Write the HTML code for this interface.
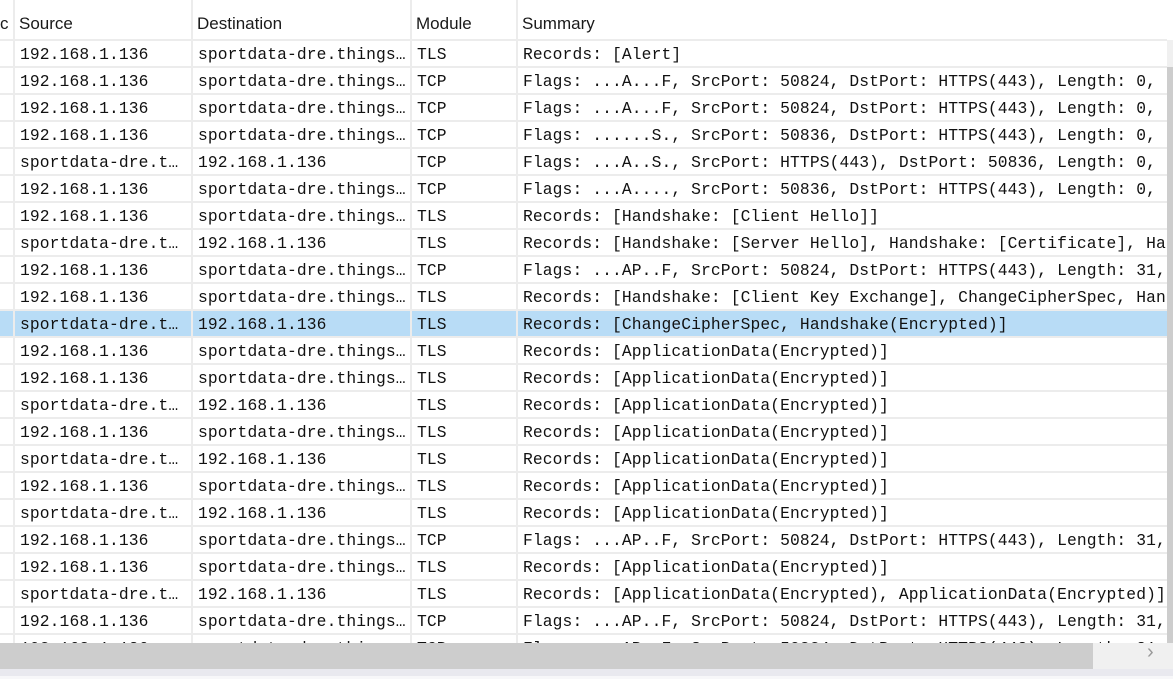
<!DOCTYPE html>
<html><head><meta charset="utf-8"><style>
*{margin:0;padding:0;box-sizing:border-box}
body{width:1173px;height:679px;overflow:hidden;background:#fff;position:relative;font-family:"Liberation Sans",sans-serif}
#grid{position:absolute;left:0;top:0;width:1167px;height:643px;overflow:hidden;background:#ececec}
.r{position:absolute;left:0;height:25px;width:1167px}
.c{position:absolute;top:0;height:25px;background:#fff;font-family:"Liberation Mono",monospace;font-size:16.3px;letter-spacing:0.12px;line-height:28px;color:#111;white-space:nowrap;overflow:hidden;padding-left:5px}
.sel .c{background:#b8dcf6}
.c0{left:0;width:13px;padding:0}
.c1{left:15px;width:176px}
.c2{left:193px;width:217px}
.c3{left:412px;width:104px}
.c4{left:518px;width:649px}
.h{position:absolute;top:0;height:39px;background:#fff;font-size:17px;line-height:48px;color:#1a1a1a;padding-left:4px;overflow:hidden;white-space:nowrap}
#vs{position:absolute;left:1167px;top:40px;width:6px;height:603px;background:#cdcdcd}
#vs0{position:absolute;left:1167px;top:40px;width:6px;height:27px;background:#f0f0f0}
#hs{position:absolute;left:0;top:643px;width:1173px;height:26px;background:#f0f0f0}
#hst{position:absolute;left:0;top:643px;width:1093px;height:26px;background:#cdcdcd}
#arr{position:absolute;left:1147px;top:641px;color:#999;font-size:20px}
#bot{position:absolute;left:0;top:669px;width:1173px;height:10px;background:#e9e9ef}
#bot2{position:absolute;left:0;top:676px;width:1173px;height:3px;background:#f7f7f9}
</style></head><body>
<div id="grid">
<div class="h" style="left:0;width:13px;padding-left:0">c</div>
<div class="h" style="left:15px;width:176px">Source</div>
<div class="h" style="left:193px;width:217px">Destination</div>
<div class="h" style="left:412px;width:104px">Module</div>
<div class="h" style="left:518px;width:649px">Summary</div>

<div class="r" style="top:41px"><div class="c c0"></div><div class="c c1">192.168.1.136</div><div class="c c2">sportdata-dre.things…</div><div class="c c3">TLS</div><div class="c c4">Records: [Alert]</div></div>
<div class="r" style="top:68px"><div class="c c0"></div><div class="c c1">192.168.1.136</div><div class="c c2">sportdata-dre.things…</div><div class="c c3">TCP</div><div class="c c4">Flags: ...A...F, SrcPort: 50824, DstPort: HTTPS(443), Length: 0,</div></div>
<div class="r" style="top:95px"><div class="c c0"></div><div class="c c1">192.168.1.136</div><div class="c c2">sportdata-dre.things…</div><div class="c c3">TCP</div><div class="c c4">Flags: ...A...F, SrcPort: 50824, DstPort: HTTPS(443), Length: 0,</div></div>
<div class="r" style="top:122px"><div class="c c0"></div><div class="c c1">192.168.1.136</div><div class="c c2">sportdata-dre.things…</div><div class="c c3">TCP</div><div class="c c4">Flags: ......S., SrcPort: 50836, DstPort: HTTPS(443), Length: 0,</div></div>
<div class="r" style="top:149px"><div class="c c0"></div><div class="c c1">sportdata-dre.t…</div><div class="c c2">192.168.1.136</div><div class="c c3">TCP</div><div class="c c4">Flags: ...A..S., SrcPort: HTTPS(443), DstPort: 50836, Length: 0,</div></div>
<div class="r" style="top:176px"><div class="c c0"></div><div class="c c1">192.168.1.136</div><div class="c c2">sportdata-dre.things…</div><div class="c c3">TCP</div><div class="c c4">Flags: ...A...., SrcPort: 50836, DstPort: HTTPS(443), Length: 0,</div></div>
<div class="r" style="top:203px"><div class="c c0"></div><div class="c c1">192.168.1.136</div><div class="c c2">sportdata-dre.things…</div><div class="c c3">TLS</div><div class="c c4">Records: [Handshake: [Client Hello]]</div></div>
<div class="r" style="top:230px"><div class="c c0"></div><div class="c c1">sportdata-dre.t…</div><div class="c c2">192.168.1.136</div><div class="c c3">TLS</div><div class="c c4">Records: [Handshake: [Server Hello], Handshake: [Certificate], Ha</div></div>
<div class="r" style="top:257px"><div class="c c0"></div><div class="c c1">192.168.1.136</div><div class="c c2">sportdata-dre.things…</div><div class="c c3">TCP</div><div class="c c4">Flags: ...AP..F, SrcPort: 50824, DstPort: HTTPS(443), Length: 31,</div></div>
<div class="r" style="top:284px"><div class="c c0"></div><div class="c c1">192.168.1.136</div><div class="c c2">sportdata-dre.things…</div><div class="c c3">TLS</div><div class="c c4">Records: [Handshake: [Client Key Exchange], ChangeCipherSpec, Han</div></div>
<div class="r sel" style="top:311px"><div class="c c0"></div><div class="c c1">sportdata-dre.t…</div><div class="c c2">192.168.1.136</div><div class="c c3">TLS</div><div class="c c4">Records: [ChangeCipherSpec, Handshake(Encrypted)]</div></div>
<div class="r" style="top:338px"><div class="c c0"></div><div class="c c1">192.168.1.136</div><div class="c c2">sportdata-dre.things…</div><div class="c c3">TLS</div><div class="c c4">Records: [ApplicationData(Encrypted)]</div></div>
<div class="r" style="top:365px"><div class="c c0"></div><div class="c c1">192.168.1.136</div><div class="c c2">sportdata-dre.things…</div><div class="c c3">TLS</div><div class="c c4">Records: [ApplicationData(Encrypted)]</div></div>
<div class="r" style="top:392px"><div class="c c0"></div><div class="c c1">sportdata-dre.t…</div><div class="c c2">192.168.1.136</div><div class="c c3">TLS</div><div class="c c4">Records: [ApplicationData(Encrypted)]</div></div>
<div class="r" style="top:419px"><div class="c c0"></div><div class="c c1">192.168.1.136</div><div class="c c2">sportdata-dre.things…</div><div class="c c3">TLS</div><div class="c c4">Records: [ApplicationData(Encrypted)]</div></div>
<div class="r" style="top:446px"><div class="c c0"></div><div class="c c1">sportdata-dre.t…</div><div class="c c2">192.168.1.136</div><div class="c c3">TLS</div><div class="c c4">Records: [ApplicationData(Encrypted)]</div></div>
<div class="r" style="top:473px"><div class="c c0"></div><div class="c c1">192.168.1.136</div><div class="c c2">sportdata-dre.things…</div><div class="c c3">TLS</div><div class="c c4">Records: [ApplicationData(Encrypted)]</div></div>
<div class="r" style="top:500px"><div class="c c0"></div><div class="c c1">sportdata-dre.t…</div><div class="c c2">192.168.1.136</div><div class="c c3">TLS</div><div class="c c4">Records: [ApplicationData(Encrypted)]</div></div>
<div class="r" style="top:527px"><div class="c c0"></div><div class="c c1">192.168.1.136</div><div class="c c2">sportdata-dre.things…</div><div class="c c3">TCP</div><div class="c c4">Flags: ...AP..F, SrcPort: 50824, DstPort: HTTPS(443), Length: 31,</div></div>
<div class="r" style="top:554px"><div class="c c0"></div><div class="c c1">192.168.1.136</div><div class="c c2">sportdata-dre.things…</div><div class="c c3">TLS</div><div class="c c4">Records: [ApplicationData(Encrypted)]</div></div>
<div class="r" style="top:581px"><div class="c c0"></div><div class="c c1">sportdata-dre.t…</div><div class="c c2">192.168.1.136</div><div class="c c3">TLS</div><div class="c c4">Records: [ApplicationData(Encrypted), ApplicationData(Encrypted)]</div></div>
<div class="r" style="top:608px"><div class="c c0"></div><div class="c c1">192.168.1.136</div><div class="c c2">sportdata-dre.things…</div><div class="c c3">TCP</div><div class="c c4">Flags: ...AP..F, SrcPort: 50824, DstPort: HTTPS(443), Length: 31,</div></div>
<div class="r" style="top:635px"><div class="c c0"></div><div class="c c1">192.168.1.136</div><div class="c c2">sportdata-dre.things…</div><div class="c c3">TCP</div><div class="c c4">Flags: ...AP..F, SrcPort: 50824, DstPort: HTTPS(443), Length: 31,</div></div>
</div>
<div id="vs"></div><div id="vs0"></div>
<div id="hs"></div><div id="hst"></div><div id="arr">›</div>
<div id="bot"></div><div id="bot2"></div>
</body></html>
